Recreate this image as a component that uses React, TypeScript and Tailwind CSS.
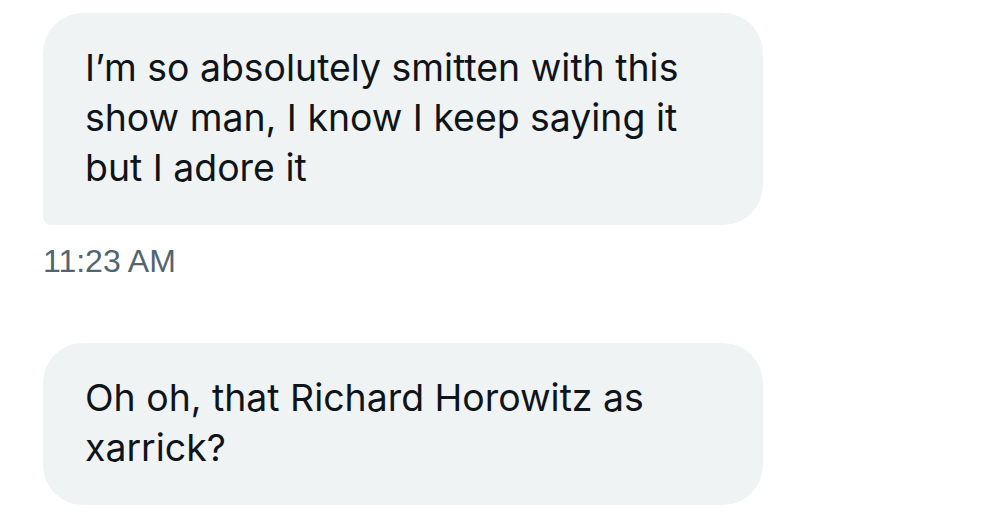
const Bubble = ({ text, tail }: { text: string; tail?: boolean }) => (
  <div
    className={`w-[720px] bg-[#eff3f4] text-[#0f1419] text-[37.4px] leading-[50px] pl-[42px] pr-[40px] pt-[30px] pb-[32px] rounded-[40px] ${
      tail ? "rounded-bl-[8px]" : ""
    }`}
  >
    {text}
  </div>
);

export default function App() {
  return (
    <div className="w-[1000px] h-[520px] bg-white overflow-hidden pl-[43px] pt-[13px] font-['Inter',sans-serif]">
      <Bubble
        tail
        text="I’m so absolutely smitten with this show man, I know I keep saying it but I adore it"
      />
      <div className="mt-[18px] text-[32px] leading-[37px] text-[#536471] font-['Liberation_Sans',Arial,sans-serif]">
        11:23 AM
      </div>
      <div className="mt-[63px]">
        <Bubble text="Oh oh, that Richard Horowitz as xarrick?" />
      </div>
    </div>
  );
}
